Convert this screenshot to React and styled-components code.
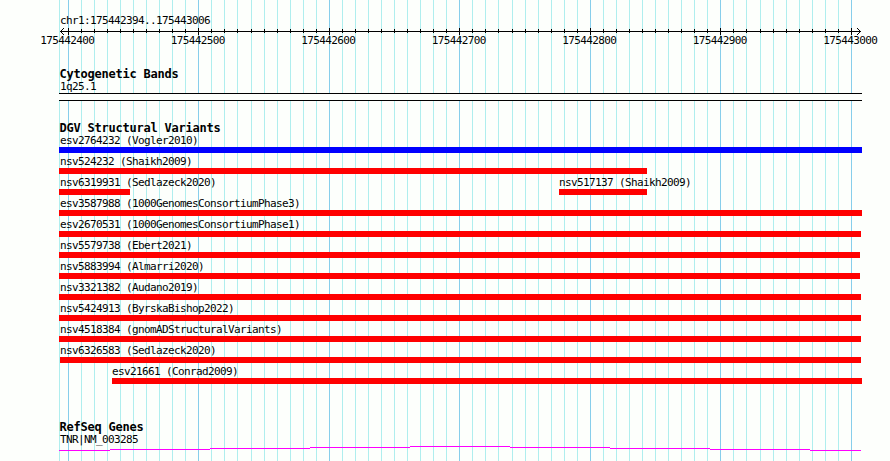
import React from "react";
import styled, { createGlobalStyle } from "styled-components";

const GlobalStyle = createGlobalStyle`
  body { margin: 0; background: #fdfffc; }
`;

const Browser = styled.main`
  position: relative;
  width: 890px;
  height: 461px;
  overflow: hidden;
  color: #000;
  font: 11px/12px "DejaVu Sans Mono", monospace;
  letter-spacing: -0.622px;
  white-space: nowrap;
`;

const Grid = styled.svg`
  position: absolute;
  inset: 0;
`;

const Content = styled.div`
  position: relative;
  display: flex;
  flex-direction: column;
  padding: 15px 28px 0 59px;
`;

const Region = styled.div`
  height: 12px;
  padding-left: 1px;
`;

const Ruler = styled.svg`
  display: block;
  width: 803px;
  height: 8px;
  margin-top: 1px;
`;

const Labels = styled.div`
  display: grid;
  grid-template-columns: repeat(7, 130.5px);
  width: 914px;
  margin-left: -57px;
  height: 12px;
  margin-top: -1px;
  text-align: center;
`;

const Track = styled.section`
  display: flex;
  flex-direction: column;
  margin-top: ${(p) => p.$gap}px;
`;

const Title = styled.h2`
  height: 13px;
  margin: 0;
  padding-left: 0.5px;
  font: bold 12px/13px "DejaVu Sans Mono", monospace;
  letter-spacing: -0.224px;
`;

const Name = styled.div`
  height: 12px;
  padding-left: ${(p) => (p.$flush ? 0 : 1)}px;
`;

const Band = styled.div`
  width: 803px;
  height: 6px;
  border: solid #000;
  border-width: 1px 0;
  background: #fdfffc;
`;

const Row = styled.div`
  display: flex;
  height: 21px;
`;

const Variant = styled.div`
  flex: none;
  width: ${(p) => p.$width}px;
  margin-left: ${(p) => p.$offset}px;
`;

const Bar = styled.div`
  height: 6px;
  background: ${(p) => p.$color};
`;

const Gene = styled.svg`
  display: block;
  width: 803px;
  height: 6px;
`;

const lines = Array.from({ length: 61 }, (_, i) => ({
  x: Math.floor(68.31 + 13.051 * i),
  major: i % 10 === 0,
}));

const positions = [400, 500, 600, 700, 800, 900, 1000].map((n) => 175442000 + n);

const rows = [
  [["esv2764232 (Vogler2010)", 0, 803, "#00f"]],
  [["nsv524232 (Shaikh2009)", 0, 588]],
  [["nsv6319931 (Sedlazeck2020)", 0, 71], ["nsv517137 (Shaikh2009)", 429, 88]],
  [["esv3587988 (1000GenomesConsortiumPhase3)", 0, 803]],
  [["esv2670531 (1000GenomesConsortiumPhase1)", 0, 802]],
  [["nsv5579738 (Ebert2021)", 0, 801]],
  [["nsv5883994 (Almarri2020)", 0, 801]],
  [["nsv3321382 (Audano2019)", 0, 802]],
  [["nsv5424913 (ByrskaBishop2022)", 0, 802]],
  [["nsv4518384 (gnomADStructuralVariants)", 0, 802]],
  [["nsv6326583 (Sedlazeck2020)", 1, 801]],
  [["esv21661 (Conrad2009)", 53, 750]],
];

const steps = [
  [0, 51, 4], [51, 100, 3], [151, 100, 2], [251, 100, 1], [351, 100, 0],
  [451, 100, 1], [551, 100, 2], [651, 100, 3], [751, 51, 4],
];

export default function App() {
  return (
    <>
      <GlobalStyle />
      <Browser>
        <Grid width="890" height="461" shapeRendering="crispEdges">
          <rect x="59" width="1" height="461" fill="#afeeee" />
          {lines.map(({ x, major }) => (
            <rect key={x} x={x} width="1" height="461" fill={major ? "#87ceeb" : "#afeeee"} />
          ))}
        </Grid>
        <Content>
          <Region>chr1:175442394..175443006</Region>
          <Ruler shapeRendering="crispEdges">
            <rect x="1" y="3" width="801" height="1" />
            {lines.map(({ x, major }) => (
              <rect key={x} x={x - 59} y={major ? 0 : 1} width="1" height={major ? 7 : 4} />
            ))}
            <path d="M2 2h1v1h-1zM3 1h1v1h-1zM4 0h1v1h-1zM2 4h1v1h-1zM3 5h1v1h-1zM4 6h1v1h-1z" />
            <path d="M800 2h1v1h-1zM799 1h1v1h-1zM798 0h1v1h-1zM800 4h1v1h-1zM799 5h1v1h-1zM798 6h1v1h-1z" />
          </Ruler>
          <Labels>
            {positions.map((p) => <span key={p}>{p}</span>)}
          </Labels>
          <Track $gap={21}>
            <Title>Cytogenetic Bands</Title>
            <Name>1q25.1</Name>
            <Band />
          </Track>
          <Track $gap={21}>
            <Title>DGV Structural Variants</Title>
            {rows.map((row) => (
              <Row key={row[0][0]}>
                {row.map(([name, offset, width, color = "#f00"]) => (
                  <Variant key={name} $offset={offset} $width={width}>
                    <Name $flush={offset > 0}>{name}</Name>
                    <Bar $color={color} />
                  </Variant>
                ))}
              </Row>
            ))}
          </Track>
          <Track $gap={34}>
            <Title>RefSeq Genes</Title>
            <Name>TNR|NM_003285</Name>
            <Gene shapeRendering="crispEdges">
              {steps.map(([x, w, y]) => (
                <rect key={x} x={x} y={y} width={w} height="1" fill="#f0f" />
              ))}
            </Gene>
          </Track>
        </Content>
      </Browser>
    </>
  );
}
